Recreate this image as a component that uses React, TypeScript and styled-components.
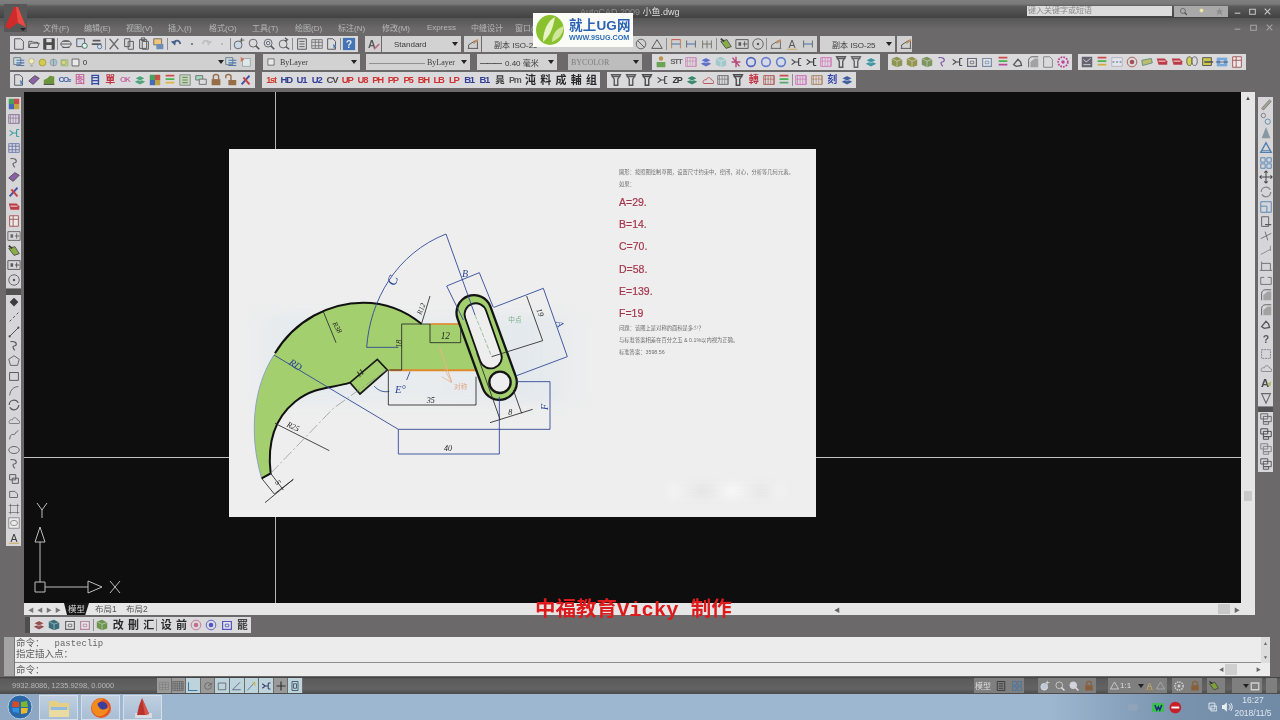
import React from "react";
import styled, { createGlobalStyle } from "styled-components";

const Global = createGlobalStyle`
  html, body { margin: 0; padding: 0; background: #6b696a; overflow: hidden; }
  * { box-sizing: border-box; }
`;

const CJK = `"Liberation Sans", "Noto Sans CJK SC", sans-serif`;

const Screen = styled.div`
  position: relative; width: 1280px; height: 720px; overflow: hidden;
  display: flex; flex-direction: column; background: #6b696a;
  font-family: ${CJK}; filter: blur(0.6px);
`;
const TitleBar = styled.div`
  height: 18px; flex: none; display: flex; align-items: center; padding: 4px 6px 0 0;
  background: linear-gradient(#807f80 0, #7a7a7a 22%, #5a5a5a 36%, #424242 100%);
`;
const TitleText = styled.div`
  margin-left: 580px; width: 441px; font-size: 9px; color: #8f8f8f; white-space: nowrap;
  b { color: #dcdcdc; font-weight: 400; }
`;
const SearchField = styled.div`
  width: 145px; height: 10px; background: #dcdcdc; color: #8a8a8a; font-size: 8px; line-height: 10px; padding-left: 1px; margin-left: 6px;
`;
const SearchBtns = styled.div`
  display: flex; margin-left: 2px; width: 54px; height: 11px; background: #a9a9a9; justify-content: space-around; align-items: center; flex: none;
`;
const WinCtrls = styled.div`
  display: flex; align-items: center; margin-left: 5px; gap: 6px; color: #e4e4e4;
`;
const MenuBar = styled.div`
  height: 18px; flex: none; display: flex; align-items: center; padding-left: 43px; color: #c4c4c4; font-size: 8px;
  background: linear-gradient(#565656, #6b696a 60%);
`;
const MenuItem = styled.div<{ $w?: number }>`width: ${p => p.$w ?? 42}px; white-space: nowrap; opacity: .85;`;
const DocCtrls = styled(WinCtrls)`margin-left: auto; margin-right: 6px; gap: 7px; opacity: .85;`;

const Row = styled.div<{ $mb: number }>`
  height: 16px; flex: none; margin-bottom: ${p => p.$mb}px; display: flex; align-items: stretch; padding-left: 10px;
`;
const Group = styled.div<{ $w: number; $ml?: number; $flat?: boolean }>`
  flex: none; width: ${p => p.$w}px; margin-left: ${p => p.$ml ?? 0}px; display: flex; align-items: center; justify-content: space-between;
  padding: 0 2px; background: ${p => p.$flat ? "#d0d0d1" : "#dadadc"};
`;
const LayerBody = styled.div`
  flex: none; width: 198px; margin-left: -1px; display: flex; align-items: center; gap: 0; color: #333; font-size: 8px;
`;
const LayerZero = styled.span`margin-left: 2px;`;
const Combo = styled.div<{ $w: number; $ml?: number; $off?: boolean; $serif?: boolean }>`
  flex: none; width: ${p => p.$w}px; margin-left: ${p => p.$ml ?? 0}px; display: flex; align-items: center; gap: 4px; padding: 0 3px;
  background: ${p => p.$off ? "#bdbdbd" : "#d2d2d2"}; color: ${p => p.$off ? "#7d7d7d" : "#3a3a3a"}; font-size: 8px; white-space: nowrap;
  font-family: ${p => p.$serif ? `"Liberation Serif", "Noto Sans CJK SC", serif` : CJK};
`;
const ComboLabel = styled.span`margin-left: 9px;`;
const Caret = styled.span`
  margin-left: auto; width: 0; height: 0; border: 3px solid transparent; border-top: 4px solid #222; border-bottom: 0; flex: none;
`;
const Heavy = styled.b`font-weight: 900; letter-spacing: -1px;`;
const Sep = styled.span`width: 1px; height: 12px; background: #8e8e8e; flex: none;`;
const Glyph = styled.span<{ $c: string; $s?: number }>`
  color: ${p => p.$c}; font-size: ${p => p.$s ?? 9.5}px; font-weight: 700; letter-spacing: -1.2px; width: 14px; text-align: center; line-height: 14px; flex: none; white-space: nowrap; opacity: .88;
`;
const IcoWrap = styled.svg<{ $s?: number }>`width: ${p => p.$s ?? 14}px; height: ${p => p.$s ?? 14}px; flex: none; display: block; opacity: .85;`;

const Middle = styled.div`height: 511px; flex: none; margin-top: 4px; display: flex;`;
const LeftRail = styled.div`width: 24px; flex: none; padding: 5px 0 0 6px; display: flex; flex-direction: column;`;
const RailGroup = styled.div<{ $h: number }>`
  width: 15px; height: ${p => p.$h}px; background: #d6d6d8; display: flex; flex-direction: column; align-items: center; justify-content: space-between; padding: 0 0 1px;
`;
const RailHandle = styled.div<{ $h: number }>`height: ${p => p.$h}px; width: 15px; background: #525252; border-top: 1px solid #8c8c8c;`;
const Canvas = styled.div`
  position: relative; width: 1217px; flex: none; background: #0e0e0e; padding: 57px 0 0 205px;
`;
const HLine = styled.div`position: absolute; left: 0; right: 0; top: 365px; height: 1px; background: #c2c2c2;`;
const VLine = styled.div`position: absolute; top: 0; bottom: 0; left: 251px; width: 1px; background: #b5b5b5;`;
const Paper = styled.div`
  position: relative; width: 587px; height: 368px; background: #eeeeee; overflow: hidden;
`;
const Faint = styled.div`
  position: absolute; left: 15px; top: 165px; width: 345px; height: 90px; filter: blur(6px); opacity: .45;
  background: linear-gradient(90deg, transparent, #dbe7ef 12%, #e3ebef 50%, #d8e4ec 85%, transparent);
`;
const Smudge = styled.div`
  position: absolute; left: 440px; top: 335px; width: 115px; height: 14px; filter: blur(4px);
  background: linear-gradient(90deg, #f6f6f6, #e4e4e4 30%, #f8f8f8 55%, #e6e6e6 80%, #f5f5f5);
`;
const Drawing = styled.svg`position: absolute; left: 1px; top: 71px; width: 370px; height: 290px;`;
const Notes = styled.div`
  position: absolute; left: 390px; top: 20px; width: 190px; display: flex; flex-direction: column;
`;
const Tiny = styled.div<{ $mb?: number }>`
  font-size: 5.3px; line-height: 7px; color: #6e6e6e; white-space: nowrap; margin-bottom: ${p => p.$mb ?? 0}px;
`;
const Ans = styled.div<{ $mb?: number }>`
  font-size: 10.5px; line-height: 12px; color: #a5364e; margin-bottom: ${p => p.$mb ?? 10.2}px; -webkit-text-stroke: .2px #a5364e;
`;
const Ucs = styled.svg`position: absolute; left: 0; top: 405px; width: 110px; height: 100px;`;

const VScroll = styled.div`
  width: 14px; flex: none; background: #e6e6e6; display: flex; flex-direction: column; align-items: center; padding-top: 3px; color: #444; font-size: 6px;
`;
const VThumb = styled.div`width: 8px; height: 10px; background: #c9c9c9; margin-top: 390px;`;
const RightRail = styled.div`width: 25px; flex: none; padding: 5px 0 0 3px; display: flex; flex-direction: column;`;

const TabRow = styled.div`
  height: 12px; flex: none; margin-left: 24px; width: 1231px; background: #e6e6e6; display: flex; align-items: center; font-size: 8.5px; color: #555;
`;
const TabNav = styled.div`display: flex; width: 40px; padding-left: 4px; gap: 3px; color: #777; font-size: 6px; flex: none;`;
const ActiveTab = styled.div`width: 25px; height: 12px; background: #161616; color: #ddd; text-align: center; line-height: 12px; flex: none; clip-path: polygon(0 0, 100% 0, 85% 100%, 12% 100%);`;
const Tab = styled.div<{ $ml: number }>`margin-left: ${p => p.$ml}px; line-height: 12px; flex: none; width: 24px;`;
const HArrow = styled.div<{ $ml: number }>`margin-left: ${p => p.$ml}px; color: #666; font-size: 6px; flex: none;`;
const HThumb = styled.div`width: 12px; height: 10px; background: #c8c8c8; margin-left: 378px; flex: none;`;

const UnderRow = styled.div`height: 16px; margin: 2px 0 4px 25px; display: flex; flex: none;`;
const Handle = styled.div`width: 5px; background: #4d4d4d; flex: none;`;

const CommandArea = styled.div`
  height: 39px; flex: none; margin: 0 10px 1px 4px; display: flex; background: #ececec;
`;
const CmdHandle = styled.div`width: 11px; background: #a4a4a4; border-right: 1px solid #777; flex: none;`;
const CmdBody = styled.div`flex: 1; display: flex; flex-direction: column; color: #5f5f5f;`;
const CmdHistory = styled.div`height: 26px; border-bottom: 1px solid #8d8d8d; padding: 1px 0 0 1px; font-size: 9.5px; line-height: 10px;`;
const Mono = styled.span`font-family: "Liberation Mono", "Noto Sans CJK SC", monospace; font-size: 9px; color: #666; margin-left: 10px;`;
const CmdLine = styled.div`padding: 1px 0 0 1px; font-size: 9.5px; line-height: 11px; display: flex;`;
const CmdScroll = styled.div`
  width: 9px; flex: none; background: #dcdcdc; display: flex; flex-direction: column; justify-content: space-between; align-items: center; height: 26px; font-size: 5px; color: #666; padding: 3px 0;
`;
const CmdHBar = styled.div`display: flex; align-items: center; margin-left: auto; width: 42px; font-size: 5px; color: #666;`;
const CmdHThumb = styled.div`width: 12px; height: 11px; background: #cfcfcf; margin: 0 auto 0 1px;`;

const Status = styled.div`
  height: 17px; flex: none; display: flex; align-items: center; padding-left: 12px; color: #b8b8b8; font-size: 7.5px;
  background: linear-gradient(#3d3d3d 0, #5b5b5b 12%, #636363 70%, #4a4a4a 100%);
`;
const Coords = styled.div`width: 145px; flex: none; white-space: nowrap;`;
const Toggles = styled.div`display: flex; height: 15px; flex: none;`;
const Toggle = styled.div<{ $on?: boolean }>`
  width: 14.6px; background: ${p => p.$on ? "#bdd4dd" : "#9a9a9a"}; border-right: 1px solid #6d6d6d; display: flex; align-items: center; justify-content: center; flex: none;
`;
const StatusRight = styled.div`margin-left: auto; display: flex; align-items: center; height: 15px; padding-right: 3px;`;
const SGroup = styled.div<{ $w: number; $ml?: number }>`
  width: ${p => p.$w}px; margin-left: ${p => p.$ml ?? 0}px; height: 15px; background: #7f7f7f; display: flex; align-items: center; justify-content: space-between; padding: 0 1px; color: #ddd; font-size: 8px; flex: none; white-space: nowrap;
`;

const Taskbar = styled.div`
  flex: 1; display: flex; align-items: stretch; background: linear-gradient(90deg, #9db7d1 0, #9db7d1 82%, #7993ae 92%, #708aa5 100%); position: relative;
`;
const Start = styled.div`width: 39px; flex: none; display: flex; align-items: center; justify-content: center; background: #8ea8c3;`;
const TaskBtn = styled.div`
  width: 39px; flex: none; margin-right: 3px; margin-top: 1px; display: flex; align-items: center; justify-content: center;
  background: linear-gradient(#bfcfe0, #a8bed4); border: 1px solid #d4dfea;
`;
const Tray = styled.div`margin-left: auto; display: flex; align-items: center; padding-right: 7px; color: #e4ebf2; font-size: 8px;`;
const TrayIcons = styled.div`display: flex; align-items: center; width: 105px; gap: 5px;`;
const TraySpace = styled.span<{ $w: number }>`width: ${p => p.$w}px;`;
const Clock = styled.div`width: 40px; text-align: center; line-height: 13px; color: #dde6ef; font-size: 8.5px;`;

const AppLogo = styled.svg`position: absolute; left: 4px; top: 4px; width: 24px; height: 28px;`;
const Brand = styled.div`
  position: absolute; left: 533px; top: 13px; width: 100px; height: 34px; background: #fbfbf8; display: flex; align-items: center; padding-left: 2px;
`;
const BrandText = styled.div`margin-left: 2px; display: flex; flex-direction: column; font-weight: 700; color: #2a62b4;`;
const BrandTop = styled.div`font-size: 13.5px; line-height: 16px; letter-spacing: .2px; white-space: nowrap;`;
const BrandUrl = styled.div`font-size: 7.2px; line-height: 8px; color: #2c70b8; white-space: nowrap;`;
const WaterMark = styled.div`
  position: absolute; left: 535px; top: 600px; color: #dd1a1c; font-size: 20.5px; line-height: 22px; font-weight: 700; white-space: nowrap;
  font-family: "Liberation Mono", "Noto Sans CJK SC", monospace;
`;

/* ---------- icons ---------- */
const L = ({ d, c = "#444", w = 1.1, f = "none" }: { d: string; c?: string; w?: number; f?: string }) => (
  <path d={d} stroke={c} strokeWidth={w} fill={f} />
);
const draw: Record<string, (c: string) => React.ReactNode> = {
  doc: c => <L d="M3 2h7l3 3v9H3z" c={c} />,
  open: c => <L d="M2 12V5h4l1 1h5v2M2 12l2-5h10l-2 5z" c={c} />,
  save: c => <><L d="M2 2h12v12H2z" c={c} f={c} /><path d="M5 2h6v4H5zM5 9h6v5H5z" fill="#ddd" /></>,
  print: c => <><ellipse cx="8" cy="8" rx="6" ry="4" fill="none" stroke={c} /><L d="M2 8h12M4 5h8M4 12h8" c={c} /></>,
  preview: c => <><L d="M2 2h9v9H2z" c={c} f="#cfdcea" /><circle cx="11" cy="10" r="3" fill="#cfe" stroke={c} /></>,
  publish: c => <><L d="M3 4h9M2 8h11" c={c} w={2} /><circle cx="11" cy="11" r="2.5" fill="none" stroke="#36a" /></>,
  cut: c => <L d="M3 2l10 12M13 2L3 14" c={c} w={1.4} />,
  copy: c => <L d="M3 2h6v9H3zM7 5h6v9H7z" c={c} />,
  paste: c => <L d="M3 3h8v10H3zM6 5h7v9H6zM5 1h4v3H5z" c={c} />,
  brush: () => <><path d="M2 2h9v7H2z" fill="#f3c36a" stroke="#555" /><path d="M5 8h8v6H5z" fill="#5a7fb0" /></>,
  undo: c => <><path d="M6 7C7 3 12 3 13 8" fill="none" stroke={c} strokeWidth="2" /><path d="M2 5l6-1-1 6z" fill={c} /></>,
  redo: () => <><path d="M3 8c1-5 6-5 7-1" fill="none" stroke="#bbb" strokeWidth="2" /><path d="M14 5l-6-1 1 6z" fill="#bbb" /></>,
  dot: c => <circle cx="8" cy="8" r="1.2" fill={c} />,
  pan: c => <><circle cx="7" cy="9" r="4.5" fill="#c8d8e8" stroke={c} /><L d="M11 1v5M9 3.5h5" c={c} /></>,
  zoom: c => <><circle cx="7" cy="7" r="4.5" fill="none" stroke={c} /><L d="M10 10l4 4" c={c} w={2} /></>,
  zoomw: c => <><circle cx="7" cy="7" r="4.5" fill="#dde" stroke={c} /><circle cx="7" cy="7" r="2" fill="none" stroke={c} /><L d="M10 10l4 4" c={c} w={2} /></>,
  zoomp: c => <><circle cx="7" cy="8" r="4.5" fill="none" stroke={c} /><L d="M10 11l4 3M9 1l3 2-3 2" c={c} w={1.5} /></>,
  sheet: c => <><L d="M3 2h10v12H3z" c={c} /><L d="M5 5h6M5 8h6M5 11h6" c={c} /></>,
  table: c => <L d="M2 3h12v10H2zM6 3v10M10 3v10M2 6h12M2 10h12" c={c} w={.8} />,
  tool: c => <><L d="M3 2h6l3 3v9H3z" c={c} /><path d="M9 8l4 2-3 4z" fill="#47a" /></>,
  help: () => <><path d="M1 1h14v14H1z" fill="#2a63ad" /><text x="8" y="13" fontSize="12" fontWeight="700" textAnchor="middle" fill="#dfeaf6">?</text></>,
  astyle: c => <><text x="1" y="12" fontSize="12" fontWeight="700" fill={c}>A</text><path d="M8 14l6-6" stroke="#b57" strokeWidth="2" /></>,
  dimst: c => <><L d="M2 13h12M3 13V9M13 13V4M3 9l8-5" c={c} /><path d="M8 7l5-5 1 2-5 4z" fill="#c9843e" /></>,
  circ: c => <><circle cx="8" cy="8" r="5.5" fill="none" stroke={c} /><L d="M4 4l8 8" c={c} /></>,
  tri: c => <L d="M8 3l6 10H2z" c={c} />,
  dimh: () => <><L d="M3 3v10M13 3v10" c="#b8792a" /><L d="M3 8h10" c="#2a5fa5" /><path d="M3 3h10" stroke="#c22" /></>,
  dimb: () => <><L d="M3 4v8M13 4v8" c="#555" /><L d="M3 8h10" c="#2a5fa5" /></>,
  dimc: () => <L d="M3 4v9M8 4v9M13 4v9M3 8h10" c="#665" />,
  leaf: () => <><path d="M2 5l6 8 6-2-5-8z" fill="#7da82e" stroke="#333" /><path d="M2 2l4 3" stroke="#222" strokeWidth="2" /></>,
  center: c => <><L d="M1 3h14v10H1z" c={c} /><path d="M4 6h3v4H4z" fill={c} /><L d="M9 8h5M11 5v6" c={c} /></>,
  target: c => <><circle cx="8" cy="8" r="6" fill="none" stroke={c} /><circle cx="8" cy="8" r="1.4" fill={c} /></>,
  textA: c => <><text x="8" y="13" fontSize="12" textAnchor="middle" fill={c}>A</text><path d="M2 14h12" stroke="#c93" /></>,
  layers: () => <><path d="M2 3h8v5H2z" fill="#9db" stroke="#555" /><path d="M6 7h8v6H6z" fill="#ddd" stroke="#555" /></>,
  bulb: () => <><circle cx="8" cy="6" r="4" fill="#fbf4a8" stroke="#999" /><path d="M6 11h4v3H6z" fill="#aaa" /></>,
  sun: () => <circle cx="8" cy="8" r="5" fill="#d7c93a" stroke="#8f8520" />,
  sun2: () => <><circle cx="8" cy="8" r="5" fill="#9ec2c8" stroke="#889" /><path d="M8 3v10" stroke="#778" /></>,
  sun3: () => <><path d="M3 4h10v9H3z" fill="#c9d76a" stroke="#7a7" /><circle cx="7" cy="8" r="3.5" fill="#dada6a" stroke="#888" /></>,
  sq: () => <path d="M3 3h10v10H3z" fill="#eee" stroke="#222" />,
  ly1: () => <><path d="M2 3h8v8H2z" fill="#cdd" stroke="#567" /><path d="M5 6h9M5 9h9M5 12h9" stroke="#36a" strokeWidth="1.4" /></>,
  ly2: () => <><path d="M4 4h9v9H4z" fill="#dee" stroke="#999" /><path d="M2 2l4 3-4 3" fill="#c64" /></>,
  book: () => <path d="M2 9l7-6 5 3-7 7z" fill="#7c4c9e" stroke="#333" />,
  chart: () => <><path d="M2 13V8l4-2 3-3 5 1v9z" fill="#5c8a22" /><path d="M2 13h12" stroke="#222" /></>,
  rain: () => <><path d="M2 2h6v6H2z" fill="#2c9a47" /><path d="M8 2h6v6H8z" fill="#c8362e" /><path d="M2 8h6v6H2z" fill="#2c58b4" /><path d="M8 8h6v6H8z" fill="#c09a26" /></>,
  bars: c => <><path d="M3 3h10" stroke="#c33" strokeWidth="2" /><path d="M3 7h10" stroke="#3a3" strokeWidth="2" /><path d="M3 11h10" stroke={c} strokeWidth="2" /></>,
  tbl2: () => <><path d="M2 2h12v12H2z" fill="#bcd5ae" stroke="#778" /><path d="M5 5h6M5 8h6M5 11h6" stroke="#564" /></>,
  lock: () => <><path d="M3 7h10v7H3z" fill="#8a5a2e" /><path d="M5 7V4c0-3 6-3 6 0v3" fill="none" stroke="#8a5a2e" strokeWidth="1.6" /></>,
  unlock: () => <><path d="M5 8h9v6H5z" fill="#8a5a2e" /><path d="M2 6V4c0-3 6-3 6 0v4" fill="none" stroke="#8a5a2e" strokeWidth="1.6" /></>,
  xtool: () => <><path d="M3 13L12 3" stroke="#2a3ea0" strokeWidth="2.4" /><path d="M5 5l7 8" stroke="#c82a2a" strokeWidth="2.4" /></>,
  blk: c => <><path d="M2 4l6-2 6 3v7l-6 2-6-3z" fill={c} /><path d="M2 4l6 3 6-2M8 7v7" stroke="#fff" strokeWidth=".5" fill="none" /></>,
  pile: c => <><path d="M2 10l6-3 6 3-6 3z" fill={c} /><path d="M2 6l6-3 6 3-6 3z" fill={c} stroke="#fff" strokeWidth=".6" /></>,
  ring: c => <circle cx="8" cy="8" r="5" fill="#d5dbe8" stroke={c} strokeWidth="1.8" />,
  ring2: c => <><circle cx="8" cy="8" r="5.5" fill="none" stroke={c} /><circle cx="8" cy="8" r="2.6" fill={c} /></>,
  hatch: c => <><path d="M2 3h12v10H2z" fill="none" stroke={c} /><path d="M4 3v10M7 3v10M10 3v10M13 3v10M2 7h12" stroke={c} strokeWidth=".7" /></>,
  cross: c => <path d="M8 2v12M3 8h10M4 3l8 10" stroke={c} strokeWidth="1.6" fill="none" />,
  tree: c => <path d="M3 5l4 3-4 3M7 8h4M11 4v8M11 4h3M11 12h3" stroke={c} strokeWidth="1.4" fill="none" />,
  person: () => <><circle cx="8" cy="4" r="2.5" fill="#b8862e" /><path d="M3 14V8h10v6z" fill="#5a9a3e" /></>,
  pin: c => <><path d="M3 2h10l-3 5v7H6V7z" fill="none" stroke={c} strokeWidth="1.6" /><path d="M3 4h10" stroke={c} strokeWidth="1.6" /></>,
  gear: c => <><circle cx="8" cy="8" r="5.5" fill="none" stroke={c} strokeWidth="2" strokeDasharray="2 1.2" /><circle cx="8" cy="8" r="2" fill={c} /></>,
  frame: c => <><path d="M3 4h10v9H3z" fill="#e8e8e8" stroke={c} strokeWidth="1.4" /><path d="M6 7h4v3H6z" fill="none" stroke={c} /></>,
  curl: c => <path d="M4 3c8-1 8 5 4 5-2 0-1 3 1 5" fill="none" stroke={c} strokeWidth="1.4" />,
  grn: () => <path d="M2 6l11-2 1 5-11 3z" fill="#b9b95c" stroke="#4d7a6a" />,
  red: () => <><path d="M2 4h9l3 3v4H4z" fill="#b8202c" /><path d="M4 7h8" stroke="#fff" /></>,
  yel: () => <><path d="M3 3h10v9H3z" fill="#c9c52e" stroke="#334" /><path d="M5 8h10" stroke="#444" strokeWidth="2" /></>,
  foot: () => <><ellipse cx="5" cy="7" rx="3" ry="5" fill="#d2d23a" stroke="#444" /><ellipse cx="11" cy="7" rx="3" ry="5" fill="#ddd" stroke="#444" /></>,
  blue2: () => <><path d="M2 3h12v10H2z" fill="#6a9fd6" /><path d="M6 6h4v4H6z" fill="#dfeaf6" /><path d="M1 8h14" stroke="#235" /></>,
  doc2: () => <><path d="M3 2h10v12H3z" fill="#eee" stroke="#933" /><path d="M3 6h10M7 2v12" stroke="#933" /></>,
  dark: () => <><path d="M2 2h12v12H2z" fill="#53505c" /><path d="M4 5l3 3 5-4M4 11h8" stroke="#d7dfe8" fill="none" /></>,
  dash: () => <><path d="M2 3h12v10H2z" fill="#e4e8f0" stroke="#aab" /><path d="M3 8h2M7 8h2M11 8h2" stroke="#245" strokeWidth="1.4" /></>,
  line: c => <L d="M3 13l2-2M7 9l2-2M11 5l2-2" c={c} />,
  line2: c => <><L d="M3 13L13 3" c={c} /><circle cx="3" cy="13" r="1.2" fill={c} /><circle cx="13" cy="3" r="1.2" fill={c} /></>,
  poly: c => <path d="M8 2l6 4-2 7H4L2 6z" fill="none" stroke={c} />,
  rect: c => <path d="M3 4h10v9H3z" fill="none" stroke={c} />,
  arc2: c => <path d="M3 13C4 6 8 3 13 3" fill="none" stroke={c} />,
  oval: c => <ellipse cx="8" cy="8" rx="6" ry="4" fill="none" stroke={c} />,
  pt: c => <path d="M8 3l5 5-5 5-5-5z" fill={c} />,
  wave: c => <path d="M3 13c1-9 5-4 6-6s2-3 4-4" fill="none" stroke={c} />,
  blockins: c => <L d="M3 3h7v6H3zM6 7h7v6H6z" c={c} />,
  blockm: c => <L d="M3 5h6l3 3v4H3z" c={c} />,
  bound: c => <L d="M4 2v12M12 2v12M2 4h12M2 12h12" c={c} w={.8} />,
  tbl3: c => <><path d="M2 2h12v12H2z" fill="#eee" stroke={c} /><ellipse cx="8" cy="8" rx="4" ry="3" fill="none" stroke={c} /></>,
  pencil: c => <path d="M3 13l9-10 2 2-9 10z" fill="#9a9a8a" stroke={c} strokeWidth=".6" />,
  dots: () => <><circle cx="5" cy="4" r="2.5" fill="none" stroke="#667" /><circle cx="10" cy="11" r="3" fill="none" stroke="#47a" /></>,
  cone: () => <path d="M8 1l5 13H3z" fill="#7b8d9a" />,
  cone2: () => <><path d="M8 2l6 11H2z" fill="none" stroke="#3a70a8" strokeWidth="1.6" /><path d="M3 11h10" stroke="#3a70a8" /></>,
  four: () => <path d="M2 2h5v5H2zM9 2h5v5H9zM2 9h5v5H2zM9 9h5v5H9z" fill="none" stroke="#3670ad" />,
  move: c => <path d="M8 1v14M1 8h14M6 3l2-2 2 2M6 13l2 2 2-2M3 6L1 8l2 2M13 6l2 2-2 2" fill="none" stroke={c} strokeWidth="1.2" />,
  rot: c => <circle cx="8" cy="8" r="5.5" fill="none" stroke={c} strokeDasharray="14 3" strokeWidth="1.4" />,
  scale: () => <><path d="M2 2h12v12H2z" fill="none" stroke="#3670ad" /><path d="M2 7h7v7" fill="none" stroke="#3670ad" /></>,
  stretch: c => <><path d="M3 2h8v11H3z" fill="none" stroke={c} /><path d="M7 11h7" stroke={c} strokeWidth="1.5" /></>,
  trim: c => <path d="M2 11L14 5M7 3l3 10" fill="none" stroke={c} />,
  ext: c => <path d="M2 12L13 6M13 2v6" fill="none" stroke={c} />,
  brk: c => <path d="M3 13V5h10v8M1 13h14M3 5V3" fill="none" stroke={c} />,
  brk2: c => <path d="M2 13h12V5H10M6 5H2v8" fill="none" stroke={c} />,
  fil: () => <><path d="M3 14V6c0-2 2-4 4-4h7" fill="none" stroke="#444" /><path d="M5 14V8l5-4h4v10z" fill="#999" /></>,
  exp: c => <path d="M3 11l5-6 3 3 1 4-6 1z" fill="none" stroke={c} strokeWidth="1.6" />,
  qm: c => <text x="8" y="13" fontSize="12" fontWeight="700" textAnchor="middle" fill={c}>?</text>,
  dashb: c => <path d="M3 3h10v10H3z" fill="none" stroke={c} strokeDasharray="2 1" />,
  cloud: c => <path d="M3 12c-2-3 1-5 3-4 0-3 5-4 6 0 2 0 3 2 2 4z" fill="none" stroke={c} />,
  texta: () => <><text x="7" y="13" fontSize="13" fontWeight="700" textAnchor="middle" fill="#333">A</text><path d="M9 9l5-3-1 6z" fill="#a9b84a" /></>,
  vv: c => <path d="M3 3h10L8 14z" fill="none" stroke={c} strokeWidth="1.3" />,
  ord1: c => <L d="M2 2h8v6H2zM5 5h9v6H5zM5 11h6v3H5z" c={c} />,
  grid2: c => <L d="M1 2h14v12H1zM4 2v12M7 2v12M10 2v12M13 2v12M1 5h14M1 8h14M1 11h14" c={c} w={.7} />,
  snap: c => <L d="M2 3v11h12" c={c} w={1.4} />,
  polar: c => <><circle cx="8" cy="8" r="4.5" fill="none" stroke={c} /><L d="M8 8l6-4" c={c} /></>,
  ang: c => <L d="M2 13h11M2 13L12 3" c={c} />,
  sp: c => <><L d="M3 14L13 3" c={c} /><path d="M9 2l5 2v5z" fill="#d5b83a" /></>,
  tt: c => <L d="M8 2v12M2 8h12" c={c} w={1.6} />,
  rr: c => <L d="M4 2h8v12H4zM6 5h4v6H6z" c={c} />,
  star: () => <path d="M8 1l2 5h5l-4 3 2 6-5-4-5 4 2-6-4-3h5z" fill="#888" />,
  close: c => <path d="M3 3l10 10M13 3L3 13" stroke={c} strokeWidth="2" />,
  min: c => <path d="M3 11h10" stroke={c} strokeWidth="2" />,
  max: c => <path d="M3 4h10v9H3z" fill="none" stroke={c} strokeWidth="1.8" />,
};

const Ico = ({ k, c = "#444", s }: { k: string; c?: string; s?: number }) => (
  <IcoWrap $s={s} viewBox="0 0 16 16" aria-hidden>{(draw[k] || draw.doc)(c)}</IcoWrap>
);

type Item = string | [string, string] | { t: string; c: string; s?: number };
const renderItems = (items: Item[]) =>
  items.map((it, i) => {
    if (it === "|") return <Sep key={i} />;
    if (typeof it === "string") return <Ico key={i} k={it} />;
    if (Array.isArray(it)) return <Ico key={i} k={it[0]} c={it[1]} />;
    return <Glyph key={i} $c={it.c} $s={it.s}>{it.t}</Glyph>;
  });
const t = (x: string, c: string, s?: number): Item => ({ t: x, c, s });

const menus: [string, number?][] = [["文件(F)", 41], ["编辑(E)"], ["视图(V)"], ["插入(I)", 41], ["格式(O)", 43], ["工具(T)", 43], ["绘图(D)", 43], ["标注(N)", 44], ["修改(M)", 45], ["Express", 44], ["中缝设计", 44], ["窗口(W)"]];

const row1a: Item[] = ["doc", "open", ["save", "#333"], "|", "print", "preview", "publish", "|", ["cut", "#555"], "copy", "paste", "brush", "|", ["undo", "#2d4f7c"], ["dot", "#555"], "redo", ["dot", "#aaa"], "|", "pan", "zoom", "zoomw", "zoomp", "|", "sheet", "table", "tool", "|", "help"];
const row1b: Item[] = ["circ", "tri", "|", "dimh", "dimb", "dimc", "|", "leaf", "center", "target", "|", ["dimst", "#555"], "textA", "dimb"];
const row2a: Item[] = ["person", t("STT", "#555", 8), ["hatch", "#c86ea8"], ["pile", "#4d5fc4"], ["blk", "#9ac5c8"], ["cross", "#b0306a"], ["ring", "#3b52b8"], ["ring", "#5a6ed0"], ["ring", "#4d6ec8"], ["tree", "#333"], ["tree", "#222"], ["hatch", "#d25cb0"], ["pin", "#444"], ["pin", "#555"], ["pile", "#2a8a9a"]];
const row2b: Item[] = [["blk", "#7f8a3a"], ["blk", "#8a8a3a"], ["blk", "#6d8a4a"], ["curl", "#7040a0"], ["tree", "#333"], ["frame", "#556"], ["frame", "#6a80a8"], ["bars", "#b03090"], ["exp", "#444"], ["fil", "#444"], ["doc", "#777"], ["gear", "#b82a90"]];
const row2c: Item[] = ["dark", ["bars", "#d8a020"], "dash", ["ring2", "#9a3a3a"], "grn", "red", "red", "foot", "yel", "blue2", "doc2"];
const row3a: Item[] = [["tool", "#445"], "book", "chart", t("CO₂", "#2a4fa0", 8), t("图", "#c45a9a", 10), t("目", "#2138a0", 11), t("單", "#c01c2c", 10), t("OK", "#c45a9a", 8), ["pile", "#3a9a6a"], "rain", ["bars", "#e0b020"], "tbl2", "layers", "lock", "unlock", "xtool"];
const row3b: Item[] = [t("1st", "#c21", 9), t("HD", "#1a2a80"), t("U1", "#1a2a90"), t("U2", "#1a2a90"), t("CV", "#333"), t("UP", "#d01a1a"), t("U8", "#d01a1a"), t("PH", "#d01a1a"), t("PP", "#d01a1a"), t("P5", "#d01a1a"), t("BH", "#d01a1a"), t("LB", "#d01a1a"), t("LP", "#d01a1a"), t("B1", "#1a2a90"), t("B1", "#1a2a90"), t("晁", "#222"), t("Pm", "#444", 9), t("沌", "#111", 11), t("料", "#111", 11), t("成", "#111", 11), t("輔", "#111", 11), t("组", "#111", 11)];
const row3c: Item[] = [["pin", "#444"], ["pin", "#444"], ["pin", "#333"], ["tree", "#333"], t("ZP", "#222", 9), ["pile", "#1f7a5a"], ["cloud", "#b03030"], ["hatch", "#555"], ["pin", "#333"], t("轉", "#c01c2c", 10), ["hatch", "#a03a30"], ["bars", "#40a060"], "|", ["hatch", "#d050b0"], ["hatch", "#a06a40"], t("刻", "#2030a0", 10), ["pile", "#284a94"]];
const leftA: Item[] = ["rain", ["hatch", "#7a5a8a"], ["tree", "#2a9a9a"], ["table", "#3a4a9a"], ["curl", "#555"], "book", "xtool", "red", "doc2", ["center", "#555"], "leaf", "center", "target"];
const leftB: Item[] = [["pt", "#222"], ["line", "#333"], ["line2", "#333"], ["curl", "#444"], ["poly", "#444"], ["rect", "#333"], ["arc2", "#444"], ["rot", "#444"], ["cloud", "#666"], ["wave", "#444"], ["oval", "#444"], ["curl", "#555"], ["blockins", "#444"], ["blockm", "#555"], ["bound", "#555"], ["tbl3", "#777"], ["textA", "#222"]];
const rightA: Item[] = [["pencil", "#444"], "dots", "cone", "cone2", "four", ["move", "#333"], ["rot", "#777"], "scale", ["stretch", "#444"], ["trim", "#555"], ["ext", "#777"], ["brk", "#555"], ["brk2", "#555"], "fil", "fil", ["exp", "#444"], ["qm", "#444"], ["dashb", "#667"], ["cloud", "#777"], "texta", ["vv", "#555"]];
const rightB: Item[] = [["ord1", "#555"], ["ord1", "#333"], ["ord1", "#777"], ["ord1", "#444"]];
const bottom: Item[] = [["pile", "#8a3a3a"], ["blk", "#1f5a6a"], ["frame", "#555"], ["frame", "#b07a9a"], "|", ["blk", "#5a8a3a"], t("改", "#111", 11), t("刪", "#111", 11), t("汇", "#111", 11), "|", t("设", "#111", 11), t("前", "#111", 11), ["ring2", "#c05a80"], ["ring2", "#3a40c0"], ["frame", "#3a40c0"], t("罷", "#333", 11)];

const toggles: [string, string, boolean?][] = [["table", "#777"], ["grid2", "#444"], ["snap", "#2a6a9a", true], ["polar", "#555"], ["rect", "#444", true], ["ang", "#446", true], ["sp", "#2a5a9a", true], ["tree", "#225", true], ["tt", "#222"], ["rr", "#234", true]];

const Blue = "#2a4396";
const Dark = "#2b2b2b";
const Green = "#a3cf6e";
const DrawingSvg = () => (
  <Drawing viewBox="0 0 1110 870">
    <path d="M95 775C55 640 70 500 135 400C195 300 300 248 400 248C470 248 530 275 575 312L695 312L752 450L472 450L390 522L360 488C310 505 255 497 195 545C140 590 110 660 122 760Z" fill={Green} />
    <path d="M135 400C195 300 300 248 400 248C470 248 530 275 575 312" fill="none" stroke="#111" strokeWidth="6" />
    <path d="M95 775C55 640 70 500 132 405" fill="none" stroke="#8ca0c0" strokeWidth="3" />
    <path d="M360 488L442 418L472 450L390 522Z" fill="none" stroke="#1a1a1a" strokeWidth="5" />
    <path d="M360 488C310 505 255 497 195 545C140 590 110 660 122 760L95 775" fill="none" stroke="#111" strokeWidth="6" />
    <path d="M600 312H692" stroke="#e08a2e" strokeWidth="5" />
    <path d="M478 451H752" stroke="#e08a2e" strokeWidth="6" />
    <line x1="732" y1="278" x2="808" y2="487" stroke="#141414" strokeWidth="112" strokeLinecap="round" />
    <line x1="732" y1="278" x2="808" y2="487" stroke={Green} strokeWidth="98" strokeLinecap="round" />
    <line x1="737" y1="283" x2="782" y2="412" stroke="#141414" strokeWidth="72" strokeLinecap="round" />
    <line x1="737" y1="283" x2="782" y2="412" stroke="#eeeeee" strokeWidth="61" strokeLinecap="round" />
    <circle cx="810" cy="487" r="32" fill="#eeeeee" stroke="#141414" strokeWidth="7" />
    <g fill="none" stroke={Blue} strokeWidth="2.6">
      <path d="M410 382C420 240 500 100 648 42" />
      <path d="M410 382H505" />
      <path d="M648 42L735 285" />
      <path d="M650 198L748 158M748 158L790 262M650 198L700 300" />
      <path d="M792 262L940 205L1012 410L860 467" />
      <path d="M132 405L505 628H960" />
      <path d="M860 485H960V628" />
      <path d="M505 628V702H808V530" />
      <path d="M432 498C445 512 460 518 478 514M540 455L530 480" />
    </g>
    <g fill="none" stroke={Dark} strokeWidth="2.6">
      <path d="M890 228L938 362M785 410L938 362" />
      <path d="M135 610L298 692" />
      <path d="M280 275L318 368" />
      <path d="M575 310L600 228" />
      <path d="M475 450V555H738V470" />
      <path d="M515 312H600V368H692V312" />
      <path d="M515 312V450H478" />
      <path d="M95 775L133 822L190 778M122 760L160 810M105 848L190 778" />
      <path d="M780 608L908 568M810 598L740 400M875 580L850 510" />
    </g>
    <path d="M122 760L310 565L470 450" stroke="#8a8a8a" strokeWidth="2" strokeDasharray="34 8 6 8" fill="none" />
    <path d="M735 285L785 410" stroke="#6fae7a" strokeWidth="2" strokeDasharray="14 5" />
    <path d="M628 380L665 485" stroke="#e9b28a" strokeWidth="3" />
    <path d="M640 440L665 488L635 470" fill="none" stroke="#dfa98c" strokeWidth="2" />
    <g fill="#222" fontFamily='"Liberation Serif", serif' fontStyle="italic" fontSize="28">
      <text x="472" y="195" fontSize="42" fill={Blue} transform="rotate(-68 487 180)">C</text>
      <text x="696" y="170" fill={Blue} fontSize="30">B</text>
      <text x="982" y="320" fill={Blue} fontSize="30" transform="rotate(70 990 310)">A</text>
      <text x="178" y="440" fill={Blue} fontSize="30" transform="rotate(32 190 430)">RD</text>
      <text x="495" y="520" fill={Blue} fontSize="32">E°</text>
      <text x="935" y="570" fill={Blue} fontSize="30" transform="rotate(-90 945 560)">F</text>
      <text x="905" y="280" fontSize="24" transform="rotate(68 920 285)">19</text>
      <text x="632" y="356">12</text>
      <text x="590" y="548" fontSize="24">35</text>
      <text x="642" y="694" fontSize="24">40</text>
      <text x="835" y="584" fontSize="24">8</text>
      <text x="505" y="385" fontSize="24" transform="rotate(-90 510 378)">18</text>
      <text x="380" y="465" fontSize="26" transform="rotate(-40 395 460)">11</text>
      <text x="298" y="325" fontSize="22" transform="rotate(60 315 325)">R38</text>
      <text x="560" y="275" fontSize="22" transform="rotate(-68 575 270)">R12</text>
      <text x="170" y="628" fontSize="24" transform="rotate(25 190 620)">R25</text>
      <text x="130" y="795" fontSize="24" transform="rotate(55 140 795)">5</text>
    </g>
    <text x="835" y="305" fontSize="20" fill="#7caf8a" fontFamily='"Noto Sans CJK SC", sans-serif'>中点</text>
    <text x="672" y="508" fontSize="20" fill="#e0a98c" fontFamily='"Noto Sans CJK SC", sans-serif'>对称</text>
  </Drawing>
);

export default function App() {
  return (
    <>
      <Global />
      <Screen>
        <TitleBar>
          <TitleText>AutoCAD 2009 <b>小鱼.dwg</b></TitleText>
          <SearchField>键入关键字或短语</SearchField>
          <SearchBtns><Ico k="zoom" s={9} c="#333" /><Ico k="bulb" s={9} /><Ico k="star" s={9} /></SearchBtns>
          <WinCtrls><Ico k="min" s={9} c="#ddd" /><Ico k="max" s={9} c="#ddd" /><Ico k="close" s={9} c="#ddd" /></WinCtrls>
        </TitleBar>
        <MenuBar>
          {menus.map(([m, w]) => <MenuItem key={m} $w={w}>{m}</MenuItem>)}
          <DocCtrls><Ico k="min" s={9} c="#bbb" /><Ico k="max" s={9} c="#bbb" /><Ico k="close" s={9} c="#bbb" /></DocCtrls>
        </MenuBar>
        <Row $mb={2}>
          <Group $w={348}>{renderItems(row1a)}</Group>
          <Group $w={16} $ml={7} $flat><Ico k="astyle" c="#444" /></Group>
          <Combo $w={79} $ml={1}><ComboLabel>Standard</ComboLabel><Caret /></Combo>
          <Group $w={17} $ml={3} $flat><Ico k="dimst" c="#444" /></Group>
          <Combo $w={150} $ml={1}><ComboLabel>副本 ISO-25</ComboLabel></Combo>
          <Group $w={185} $flat>{renderItems(row1b)}</Group>
          <Combo $w={75} $ml={3}><ComboLabel>副本 ISO-25</ComboLabel><Caret /></Combo>
          <Group $w={15} $ml={2} $flat><Ico k="dimst" c="#444" /></Group>
        </Row>
        <Row $mb={2}>
          <Group $w={245} $flat>
            <Ico k="ly1" />
            <LayerBody>
              <Ico k="bulb" s={11} /><Ico k="sun" s={11} /><Ico k="sun2" s={11} /><Ico k="sun3" s={11} /><Ico k="sq" s={11} />
              <LayerZero>0</LayerZero>
              <Caret />
            </LayerBody>
            <Ico k="ly1" /><Ico k="ly2" />
          </Group>
          <Combo $w={97} $ml={8} $serif><Ico k="sq" s={10} />ByLayer<Caret /></Combo>
          <Combo $w={104} $ml={6} $serif>——————— ByLayer<Caret /></Combo>
          <Combo $w={80} $ml={7}><Heavy>———</Heavy>0.40 毫米<Caret /></Combo>
          <Combo $w={74} $ml={11} $off $serif>BYCOLOR<Caret /></Combo>
          <Group $w={228} $ml={10}>{renderItems(row2a)}</Group>
          <Group $w={184} $ml={8}>{renderItems(row2b)}</Group>
          <Group $w={168} $ml={6}>{renderItems(row2c)}</Group>
        </Row>
        <Row $mb={0}>
          <Group $w={245}>{renderItems(row3a)}</Group>
          <Group $w={338} $ml={7}>{renderItems(row3b)}</Group>
          <Group $w={249} $ml={7}>{renderItems(row3c)}</Group>
        </Row>

        <Middle>
          <LeftRail>
            <RailGroup $h={191}>{renderItems(leftA)}</RailGroup>
            <RailHandle $h={7} />
            <RailGroup $h={251}>{renderItems(leftB)}</RailGroup>
          </LeftRail>
          <Canvas>
            <HLine />
            <VLine />
            <Paper>
              <Faint />
              <Smudge />
              <Notes>
                <Tiny $mb={5}>圖形：按照图绘制草图，设置尺寸约束中，密闭，对心，分析等几何元素。</Tiny>
                <Tiny $mb={8}>如果：</Tiny>
                <Ans>A=29.</Ans><Ans>B=14.</Ans><Ans>C=70.</Ans><Ans>D=58.</Ans><Ans>E=139.</Ans>
                <Ans $mb={6}>F=19</Ans>
                <Tiny $mb={5}>问题：该图上是对称的面积是多少？</Tiny>
                <Tiny $mb={5}>与标准答案相差在百分之五 &amp; 0.1%以内视为正确。</Tiny>
                <Tiny>标准答案：3598.56</Tiny>
              </Notes>
              <DrawingSvg />
            </Paper>
            <Ucs viewBox="0 0 110 100">
              <g fill="none" stroke="#bdbdbd" strokeWidth="1">
                <path d="M16 85V45M11 45L16 30L21 45Z" />
                <path d="M11 85h10v10H11z" />
                <path d="M21 90H64M64 84V96L78 90Z" />
                <path d="M13 6L18 13L23 6M18 13V21" />
                <path d="M86 84L96 96M96 84L86 96" />
              </g>
            </Ucs>
          </Canvas>
          <VScroll>▲<VThumb /></VScroll>
          <RightRail>
            <RailGroup $h={309}>{renderItems(rightA)}</RailGroup>
            <RailHandle $h={6} />
            <RailGroup $h={60}>{renderItems(rightB)}</RailGroup>
          </RightRail>
        </Middle>

        <TabRow>
          <TabNav><span>◀</span><span>◀</span><span>▶</span><span>▶</span></TabNav>
          <ActiveTab>模型</ActiveTab>
          <Tab $ml={6}>布局1</Tab>
          <Tab $ml={7}>布局2</Tab>
          <HArrow $ml={684}>◀</HArrow>
          <HThumb />
          <HArrow $ml={4}>▶</HArrow>
        </TabRow>
        <UnderRow>
          <Handle />
          <Group $w={221}>{renderItems(bottom)}</Group>
        </UnderRow>

        <CommandArea>
          <CmdHandle />
          <CmdBody>
            <CmdHistory>
              <div>命令：<Mono>pasteclip</Mono></div>
              <div>指定插入点：</div>
            </CmdHistory>
            <CmdLine>命令：<CmdHBar>◀<CmdHThumb />▶</CmdHBar></CmdLine>
          </CmdBody>
          <CmdScroll><span>▲</span><span>▼</span></CmdScroll>
        </CommandArea>

        <Status>
          <Coords>9932.8086, 1235.9298, 0.0000</Coords>
          <Toggles>
            {toggles.map(([k, c, on], i) => <Toggle key={i} $on={on}><Ico k={k} c={c} s={12} /></Toggle>)}
          </Toggles>
          <StatusRight>
            <SGroup $w={50}>模型<Ico k="sheet" s={12} c="#222" /><Ico k="four" s={12} /></SGroup>
            <SGroup $w={58} $ml={14}><Ico k="pan" s={12} c="#eee" /><Ico k="zoom" s={12} c="#eee" /><Ico k="zoomw" s={12} c="#eee" /><Ico k="lock" s={12} /></SGroup>
            <SGroup $w={59} $ml={12}><Ico k="tri" s={11} c="#eee" />1:1<Caret /><Ico k="textA" s={11} c="#e0c060" /><Ico k="tri" s={11} c="#bbb" /></SGroup>
            <SGroup $w={30} $ml={5}><Ico k="gear" s={12} c="#ddd" /><Ico k="lock" s={12} /></SGroup>
            <SGroup $w={18} $ml={5}><Ico k="leaf" s={12} /></SGroup>
            <SGroup $w={30} $ml={7}><Caret /><Ico k="max" s={12} c="#ddd" /></SGroup>
            <SGroup $w={11} $ml={4} />
          </StatusRight>
        </Status>

        <Taskbar>
          <Start>
            <svg width="26" height="26" viewBox="0 0 26 26" aria-hidden>
              <circle cx="13" cy="13" r="12" fill="#2a68a8" stroke="#b8cde0" />
              <path d="M6 7l6 1v5H5z" fill="#d84a2a" />
              <path d="M14 8l6-1 1 6h-7z" fill="#7ab82e" />
              <path d="M5 14h7v5l-6-1z" fill="#2f8fe0" />
              <path d="M14 14h7l-1 5-6 1z" fill="#eab92a" />
            </svg>
          </Start>
          <TaskBtn>
            <svg width="24" height="20" viewBox="0 0 24 20" aria-hidden>
              <path d="M2 3h8l2 2h10v14H2z" fill="#e4cf84" />
              <path d="M4 9h16v7H4z" fill="#8fbbe0" />
              <path d="M2 12h20v7H2z" fill="#eadba0" />
            </svg>
          </TaskBtn>
          <TaskBtn>
            <svg width="22" height="22" viewBox="0 0 22 22" aria-hidden>
              <circle cx="11" cy="11" r="10" fill="#e8561f" />
              <circle cx="12" cy="10" r="5.5" fill="#3a3f9e" />
              <path d="M2 8c2-5 8-8 13-6-3 0-4 2-5 3-3 0-3 3-1 5 2 4 8 3 10-1 0 6-5 11-11 10C4 18 1 13 2 8z" fill="#f28a1e" />
            </svg>
          </TaskBtn>
          <TaskBtn>
            <svg width="22" height="22" viewBox="0 0 22 22" aria-hidden>
              <path d="M3 16h17v5H3z" fill="#d8dce0" />
              <path d="M10 1l7 16-4 1H5l2-9z" fill="#b8322e" />
              <path d="M10 1l7 16-4 1z" fill="#d9534a" />
            </svg>
          </TaskBtn>
          <Tray>
            <TrayIcons>
              <svg width="10" height="7" viewBox="0 0 10 7" aria-hidden><path d="M0 0h10v7H0z" fill="#8fa4b8" /></svg>
              <TraySpace $w={4} />
              <svg width="13" height="11" viewBox="0 0 13 11" aria-hidden><path d="M0 1h13v9H0z" fill="#3cc04a" /><path d="M3 3l2 5 1.5-3L8 8l2-5" stroke="#1a2a80" strokeWidth="1.6" fill="none" /></svg>
              <svg width="13" height="13" viewBox="0 0 13 13" aria-hidden><circle cx="6.5" cy="6.5" r="6" fill="#c8202a" /><path d="M2.5 5.5h8v2h-8z" fill="#fff" /></svg>
              <TraySpace $w={16} />
              <svg width="10" height="10" viewBox="0 0 10 10" aria-hidden><path d="M1 1h6v6H1zM3 4h6v5H3z" fill="none" stroke="#dfe8f0" /></svg>
              <svg width="11" height="10" viewBox="0 0 11 10" aria-hidden><path d="M0 3h2l3-3v10L2 7H0z" fill="#e6edf3" /><path d="M7 2c2 2 2 4 0 6M9 1c2 3 2 5 0 8" stroke="#e6edf3" fill="none" /></svg>
            </TrayIcons>
            <Clock>16:27<br />2018/11/5</Clock>
          </Tray>
        </Taskbar>

        <AppLogo viewBox="0 0 24 28" aria-hidden>
          <path d="M0 0h23v28H0z" fill="#575757" />
          <path d="M10 3h4l8 20-8-4-9 6-4-2z" fill="#cf2b2a" />
          <path d="M12 3h2l8 20-8-4z" fill="#ea4a44" />
          <path d="M19 27l3-3h-6z" fill="#222" />
        </AppLogo>
        <Brand>
          <svg width="32" height="32" viewBox="0 0 32 32" aria-hidden>
            <ellipse cx="15" cy="16" rx="14" ry="15" fill="#8ac12e" />
            <path d="M8 28C8 15 14 6 20 3c-2 10-4 18-12 25z" fill="#e8f3c8" />
            <path d="M17 28c0-8 5-14 12-16-1 8-5 13-12 16z" fill="#e0efb8" opacity=".8" />
          </svg>
          <BrandText>
            <BrandTop>就上UG网</BrandTop>
            <BrandUrl>WWW.9SUG.COM</BrandUrl>
          </BrandText>
        </Brand>
        <WaterMark>中福教育Vicky 制作</WaterMark>
      </Screen>
    </>
  );
}
